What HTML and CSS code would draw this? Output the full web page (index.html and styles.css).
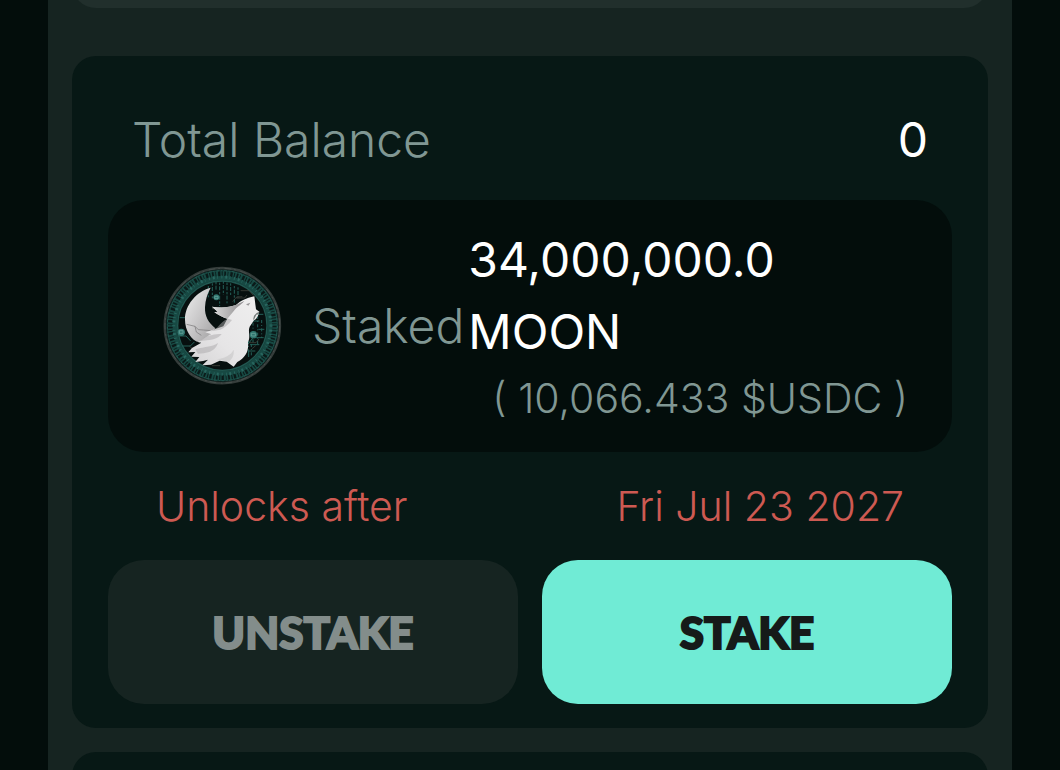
FILE: index.html
```html
<!DOCTYPE html>
<html lang="en">
<head>
<meta charset="utf-8">
<meta name="viewport" content="width=device-width, initial-scale=1">
<title>Staking</title>
<link rel="stylesheet" href="styles.css">
</head>
<body>
<main class="panel">
  <div class="card card-previous"></div>
  <section class="card">
    <div class="balance">
      <span class="muted">Total Balance</span>
      <span class="value">0</span>
    </div>
    <div class="staked">
      <svg class="token" viewBox="30 30 360 360" role="img" aria-label="Moon token">
        <defs>
          <linearGradient id="moon" x1="0" y1="0" x2="1" y2="1"><stop offset="0" stop-color="#eeeeee"/><stop offset=".5" stop-color="#c9c8c9"/><stop offset="1" stop-color="#9e9d9e"/></linearGradient>
          <linearGradient id="fur" x1="1" y1="0" x2="0" y2="1"><stop offset="0" stop-color="#efefef"/><stop offset=".6" stop-color="#e6e5e6"/><stop offset="1" stop-color="#d4d3d4"/></linearGradient>
          <linearGradient id="ear" x1="0" y1="0" x2="1" y2="0"><stop offset="0" stop-color="#dcdcdc"/><stop offset="1" stop-color="#8d8b8d"/></linearGradient>
        </defs>
        <circle cx="211" cy="209" r="173" fill="#102220" stroke="#343c3a" stroke-width="7"/>
        <circle cx="211" cy="209" r="151" fill="none" stroke="#174943" stroke-width="30"/>
        <g fill="none">
          <circle cx="211" cy="209" r="156" stroke="#0b1a19" stroke-width="14" stroke-dasharray="5 5 2 6 7 4 3 5"/>
          <circle cx="211" cy="209" r="146" stroke="#28665f" stroke-width="9" stroke-dasharray="3 9 6 7 2 11"/>
          <circle cx="211" cy="209" r="165" stroke="#235750" stroke-width="3" stroke-dasharray="8 5 3 7"/>
          <circle cx="211" cy="209" r="172" stroke="#515956" stroke-width="2" stroke-dasharray="20 9 5 14"/>
        </g>
        <circle cx="211" cy="209" r="134" fill="#07100f" stroke="#205750" stroke-width="4"/>
        <g fill="none" stroke="#246159" stroke-width="3">
          <path d="M181 82v45M192 78v26M203 80v70M214 76v40M225 80v62M236 82v38M247 90v50M258 94v30M169 90v34" stroke-dasharray="7 4 12 5"/>
          <path d="M83 185h15l8 8M80 240h22l14 15M91 270h24l12-12M310 175h24M322 195h-20l-12 14M337 220h-18M335 245h-32l-14 18M322 266h-28M310 285h-20v18"/>
          <path d="M303 200v60M317 180v85M329 192v54M289 255v50M298 264v40" stroke-dasharray="9 6 3 7"/>
        </g>
        <g fill="none" stroke="#4b4b45" stroke-width="2"><path d="M266 104h26l12 14M253 126h25l7-9M242 137l12-14 17-1M292 260h20l9-11M299 279l12-10M180 158h18M112 270l17 15M180 329h24"/></g>
        <g fill="#2f756d"><circle cx="193" cy="124" r="9"/><circle cx="88" cy="229" r="11"/><circle cx="304" cy="236" r="11"/></g>
        <g fill="none" stroke="#73aaa4" stroke-width="2"><path d="M188 121h10v7h-10zM82 224h11v8H82zM298 232h12v8h-12z"/></g>
        <path d="M176 95C134 106 98 147 99 191c0 31 18 63 44 68 17-8 31-20 47-42-21-17-32-36-31-63 1-22 7-41 17-59z" fill="url(#moon)"/>
        <path d="M104 205l25 6 10 10 15 1 24 2M129 211l4 17 15 10" fill="none" stroke="#767476" stroke-width="2"/>
        <path d="M307 121C282 126 266 135 252 147C231 155 207 156 180 152L197 167L187 169C202 179 213 185 226 188L214 211L181 222L160 229L176 234L149 253L137 258L148 260L120 276L109 289L130 288L118 302L142 303L130 318L153 315L168 311L151 328L177 326L203 314L224 317L245 332L256 318C281 304 291 285 288 259C298 238 284 224 296 208L306 193L312 189L318 179L322 167L312 160L310 145Z" fill="url(#fur)"/>
        <path d="M180 152c28 5 51 2 71-5l26-12c-13 15-23 18-31 29l-20 24c-14-4-25-10-39-19l10-2z" fill="url(#ear)"/>
        <path d="M228 188c-14 5-23 15-33 27l-19 11 29-5c14-6 23-15 35-29zM167 240c19-4 31-7 42-5-8 8-20 16-38 17l-27 3zM130 280c31-9 52-7 68-19-6 20-24 28-43 31l-17 1z" fill="#aaa8aa" opacity=".5"/>
        <path d="M195 310c28-5 40-12 50-29 2 20-7 30-15 36z" fill="#aaa8aa" opacity=".3"/>
        <path d="M322 167l-2 8-7 1-6 13-4 3 3-13 8-8z" fill="#777d7b"/>
        <path d="M282 145l13-5-6 9z" fill="#999799"/>
      </svg>
      <span class="muted">Staked</span>
      <div class="amounts">
        <div class="value">34,000,000.0 MOON</div>
        <div class="fiat">( 10,066.433 $USDC )</div>
      </div>
    </div>
    <div class="unlock">
      <span>Unlocks after</span>
      <time datetime="2027-07-23">Fri Jul 23 2027</time>
    </div>
    <div class="actions">
      <button class="button" type="button" disabled>UNSTAKE</button>
      <button class="button button-primary" type="button">STAKE</button>
    </div>
  </section>
  <div class="card card-next"></div>
</main>
</body>
</html>
```
FILE: styles.css
```css
* { box-sizing: border-box; }
html { background: #030d0b; }
body {
  margin: 0;
  height: 100vh;
  overflow: hidden;
  padding: 0 48px;
  font-family: Inter, "Liberation Sans", sans-serif;
  font-size: 48px;
  font-weight: 300;
  line-height: 72px;
}
.panel {
  display: flow-root;
  height: 100vh;
  overflow: hidden;
  padding: 0 24px;
  background: #162421;
}
.card {
  padding: 24px 36px;
  border-radius: 24px;
  background: #071815;
}
.card-previous {
  height: 48px;
  margin: -40px 0 48px;
  background: #212f2c;
}
.card-next {
  height: 120px;
  margin-top: 24px;
}
.balance {
  display: flex;
  justify-content: space-between;
  padding: 24px;
}
.muted { color: #809793; }
.value {
  color: #fff;
  font-weight: 400;
}
.staked {
  display: flex;
  align-items: center;
  padding: 24px;
  border-radius: 36px;
  background: #030d0b;
}
.token {
  flex: none;
  width: 120px;
  height: 120px;
  margin: 0 30px;
}
.amounts {
  flex: 1;
  min-width: 0;
  padding-left: 4px;
}
.fiat {
  padding: 0 24px;
  color: #809793;
  font-size: 41px;
  line-height: 60px;
  text-align: right;
  white-space: nowrap;
}
.unlock {
  display: flex;
  justify-content: space-between;
  padding: 24px 48px;
  color: #cd5a52;
  font-size: 41px;
  line-height: 60px;
}
.actions {
  display: grid;
  grid-template-columns: 1fr 1fr;
  gap: 24px;
}
.button {
  padding: 36px 24px;
  border: 0;
  border-radius: 36px;
  background: #162421;
  color: #838d8b;
  font-family: Lato, "Open Sans", sans-serif;
  font-size: 44px;
  font-weight: 900;
  line-height: 72px;
  -webkit-text-stroke: 2px currentColor;
}
.button-primary {
  background: #70ebd5;
  color: #161a19;
  cursor: pointer;
}
```
